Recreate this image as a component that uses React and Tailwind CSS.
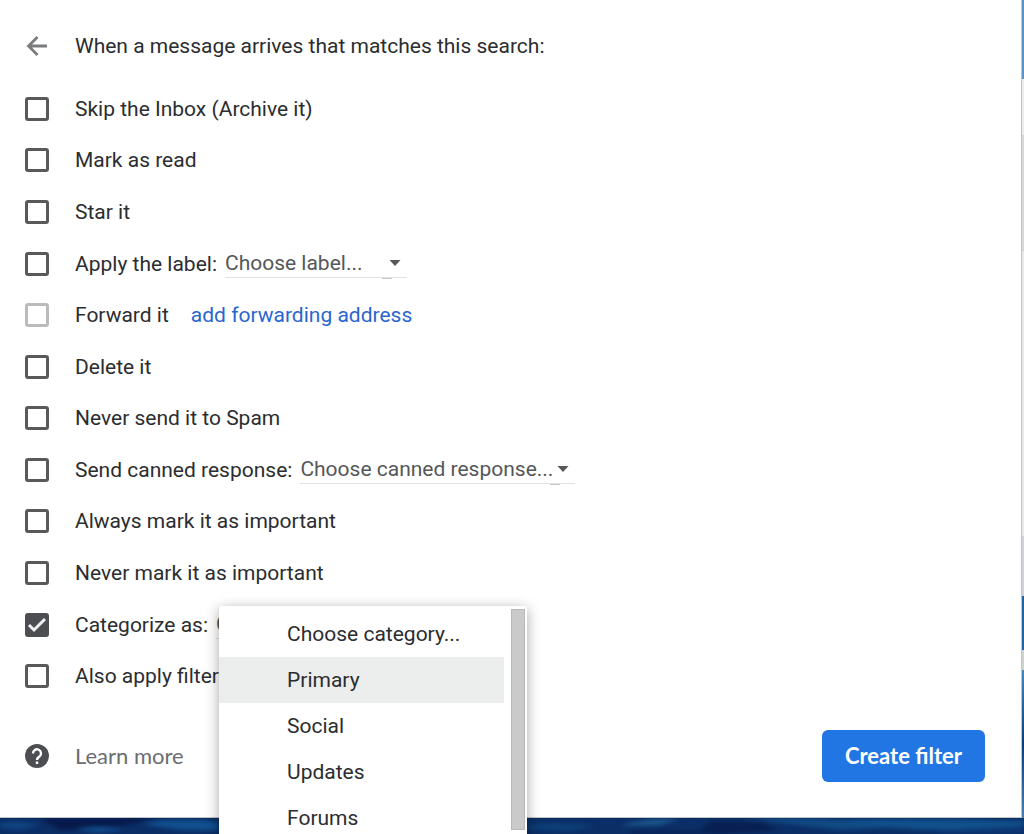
import { useState } from 'react';

const categories = ['Choose category...', 'Primary', 'Social', 'Updates', 'Forums'];

function Caret() {
  return (
    <svg viewBox="0 0 12 6" className="pointer-events-none absolute right-[6px] top-1/2 h-[6px] w-3 -translate-y-1/2 fill-[#555759]" aria-hidden="true">
      <path d="M0.5 0h11L6 6z" />
    </svg>
  );
}

function Picker({ label, width }) {
  return (
    <div className={`relative ml-2 border-b border-[#e2e2e2] ${width}`}>
      <select aria-label={label} className="block h-7 w-full appearance-none bg-transparent leading-7 text-[#555759] outline-none">
        <option>{label}</option>
      </select>
      <Caret />
      <span className="absolute -bottom-[2px] right-[15px] h-px w-[10px] bg-[#c8c8c8]" />
    </div>
  );
}

function Row({ id, label, disabled, defaultChecked, children }) {
  return (
    <li className="flex items-center">
      <span className="relative mr-[26px] flex size-6 shrink-0">
        <input
          id={id}
          type="checkbox"
          disabled={disabled}
          defaultChecked={defaultChecked}
          className="peer size-6 appearance-none rounded-[3px] border-[3px] border-[#58595b] checked:bg-[#4d4e51] checked:border-[#4d4e51] disabled:border-[#b9bbbd]"
        />
        <svg viewBox="0 0 24 24" className="pointer-events-none absolute inset-0 hidden size-6 fill-none stroke-[#f0f0f0] stroke-[3] peer-checked:block" aria-hidden="true">
          <path d="M4 12l5 5L20 6" />
        </svg>
      </span>
      <label htmlFor={id} className="whitespace-nowrap">{label}</label>
      {children}
    </li>
  );
}

function CategoryMenu() {
  const [active, setActive] = useState('Primary');

  return (
    <div className="absolute -top-1 left-[11px] z-10 flex h-[240px] w-[308px] justify-between rounded-t-[3px] bg-white pr-[2px] pt-[3px] shadow-[0_3px_14px_rgba(0,0,0,0.35)]">
      <div role="listbox" aria-label="Category" className="w-[285px] pt-[2px]">
        {categories.map((name) => (
          <button
            key={name}
            type="button"
            role="option"
            aria-selected={name === active}
            onMouseEnter={() => setActive(name)}
            className="block h-[46px] w-full pl-[68px] text-left text-[#2b2d30] aria-selected:bg-[#eceeed]"
          >
            {name}
          </button>
        ))}
      </div>
      <div className="h-[221px] w-[14px] border border-[#b8b8b8] bg-[#cacaca]" />
    </div>
  );
}

// sliver of the window and desktop behind the dialog
function SideStrip() {
  return (
    <div className="flex w-[2px] shrink-0 flex-col">
      <div className="h-[79px] bg-[#5b93c4]" />
      <div className="h-14 bg-[#ececec]" />
      <div className="h-[116px] border-y border-[#d0d0dc] bg-[#d9d9d9]" />
      <div className="h-[285px] bg-[#e8e8e8]" />
      <div className="h-[60px] bg-[#cfd2d8]" />
      <div className="h-[54px] bg-[#1d66a3]" />
      <div className="h-5 bg-[#d0d2d0]" />
      <div className="flex-1 bg-linear-to-b from-[#4788bd] via-[#0b3d79] to-[#4a80b0]" />
    </div>
  );
}

function Water() {
  return (
    <svg viewBox="0 0 1024 16" preserveAspectRatio="none" className="block h-4 w-full bg-[#0b2e66]" aria-hidden="true">
      <g className="blur-[2px]">
        <path d="M40 0h120L110 10L60 12z" fill="#07194a" />
        <path d="M0 5q20-4 40 2l-20 5L0 10z" fill="#0f4482" />
        <path d="M75 11q25-5 48 0q-22 6-48 0zM140 5q40-6 78-1v8q-40 2-78-7z" fill="#11508f" />
        <path d="M527 7q30-4 70 1l-30 5l-40-2z" fill="#0d4079" />
        <path d="M620 8q20-8 60-7l-20 6z" fill="#1d5a8f" />
        <path d="M630 13h70l10-9h50l20 8l-50 4h-100z" fill="#081f52" />
        <path d="M740 0h80l80 9l-60 3z" fill="#114a84" />
        <path d="M830 3q60-4 194 0v5q-90 10-194-5z" fill="#11518c" />
        <path d="M940 13l84-5v8h-90z" fill="#0c3672" />
      </g>
    </svg>
  );
}

export default function App() {
  return (
    <div className="flex min-h-screen flex-col overflow-hidden font-[Roboto,sans-serif] text-[21px] leading-8 text-[#2b2d30]">
      <div className="flex flex-1">
        <main className="flex flex-1 flex-col border-b border-r border-[#c4c4c4] bg-white pl-[25px] pr-9">
          <header className="mb-[7px] mt-4 flex h-15 items-center">
            <button type="button" aria-label="Back" className="mr-[26px] size-6">
              <svg viewBox="0 0 24 24" className="size-6 fill-none stroke-[#7b7c7e] stroke-[2.8]" aria-hidden="true">
                <path d="M22 12H4M12.5 3L3.5 12l9 9" />
              </svg>
            </button>
            <h1>When a message arrives that matches this search:</h1>
          </header>

          <ul className="grid flex-1 auto-rows-fr">
            <Row id="skip" label="Skip the Inbox (Archive it)" />
            <Row id="read" label="Mark as read" />
            <Row id="star" label="Star it" />
            <Row id="label" label="Apply the label:">
              <Picker label="Choose label..." width="w-[182px]" />
            </Row>
            <Row id="forward" label="Forward it" disabled>
              <a href="#forwarding" className="ml-[22px] text-[#2a66d0]">add forwarding address</a>
            </Row>
            <Row id="delete" label="Delete it" />
            <Row id="spam" label="Never send it to Spam" />
            <Row id="canned" label="Send canned response:">
              <Picker label="Choose canned response..." width="w-[275px]" />
            </Row>
            <Row id="important" label="Always mark it as important" />
            <Row id="unimportant" label="Never mark it as important" />
            <Row id="categorize" label="Categorize as:" defaultChecked>
              <div className="relative">
                <Picker label="Choose category..." width="w-[240px]" />
                <CategoryMenu />
              </div>
            </Row>
            <Row id="also" label="Also apply filter" />
          </ul>

          <footer className="flex items-center pb-[35px] pt-7 font-[Lato,sans-serif] text-[22px]">
            <a href="#help" className="flex items-center text-[#6b6d70]">
              <svg viewBox="0 0 24 24" className="mr-[26px] size-6" aria-hidden="true">
                <circle cx="12" cy="12" r="12" fill="#4d4e51" />
                <path d="M8 9.4a4 4 0 1 1 6.6 3c-1.5 1.2-2.6 1.8-2.6 3.6" fill="none" stroke="#fff" strokeWidth="2.4" />
                <path d="M10.8 17.6h2.4V20h-2.4z" fill="#fff" />
              </svg>
              Learn more
            </a>
            <button type="button" className="ml-auto h-[52px] rounded-md bg-[#2276e3] px-[23px] font-bold text-white">
              Create filter
            </button>
          </footer>
        </main>
        <SideStrip />
      </div>
      <Water />
    </div>
  );
}
